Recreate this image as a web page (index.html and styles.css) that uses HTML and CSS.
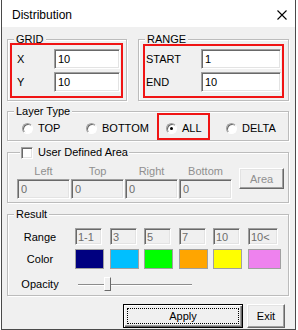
FILE: index.html
```html
<!DOCTYPE html>
<html lang="en">
<head>
    <meta charset="UTF-8">
    <title>Distribution</title>
    <link rel="stylesheet" href="styles.css">
</head>
<body>
    <div class="window">
        <div class="titlebar">
            <span class="title">Distribution</span>
            <svg class="close" width="10" height="10" viewBox="0 0 10 10">
                <path d="M0.5 0.5 L9.5 9.5 M9.5 0.5 L0.5 9.5" stroke="#000" stroke-width="1.1" fill="none"/>
            </svg>
        </div>
        <div class="client">
            <div class="top-row">
                <div class="group grid-group">
                    <div class="group-title">GRID</div>
                    <div class="mark">
                        <div class="field-row"><label>X</label><input class="edit" type="text" value="10"></div>
                        <div class="field-row"><label>Y</label><input class="edit" type="text" value="10"></div>
                    </div>
                </div>
                <div class="group range-group">
                    <div class="group-title">RANGE</div>
                    <div class="mark">
                        <div class="field-row"><label>START</label><input class="edit" type="text" value="1"></div>
                        <div class="field-row"><label>END</label><input class="edit" type="text" value="10"></div>
                    </div>
                </div>
            </div>

            <div class="group layer-group">
                <div class="group-title">Layer Type</div>
                <div class="radio-row">
                    <div class="radio radio-top"><span class="circle"></span>TOP</div>
                    <div class="radio radio-bottom"><span class="circle"></span>BOTTOM</div>
                    <div class="radio radio-all mark"><span class="circle on"></span>ALL</div>
                    <div class="radio radio-delta"><span class="circle"></span>DELTA</div>
                </div>
            </div>

            <div class="group user-group">
                <div class="group-title check-title"><span class="checkbox"></span>User Defined Area</div>
                <div class="area-row">
                    <div class="coord"><span>Left</span><input class="edit" type="text" value="0" disabled></div>
                    <div class="coord"><span>Top</span><input class="edit" type="text" value="0" disabled></div>
                    <div class="coord"><span>Right</span><input class="edit" type="text" value="0" disabled></div>
                    <div class="coord"><span>Bottom</span><input class="edit" type="text" value="0" disabled></div>
                    <button class="btn area-btn" disabled>Area</button>
                </div>
            </div>

            <div class="group result-group">
                <div class="group-title">Result</div>
                <div class="result-row range-row">
                    <span class="name">Range</span>
                    <div class="cells">
                        <input class="edit" type="text" value="1-1" disabled>
                        <input class="edit" type="text" value="3" disabled>
                        <input class="edit" type="text" value="5" disabled>
                        <input class="edit" type="text" value="7" disabled>
                        <input class="edit" type="text" value="10" disabled>
                        <input class="edit last" type="text" value="10&lt;" disabled>
                    </div>
                </div>
                <div class="result-row color-row">
                    <span class="name">Color</span>
                    <div class="cells">
                        <span class="swatch navy"></span>
                        <span class="swatch sky"></span>
                        <span class="swatch lime"></span>
                        <span class="swatch orange"></span>
                        <span class="swatch yellow"></span>
                        <span class="swatch violet last"></span>
                    </div>
                </div>
                <div class="result-row opacity-row">
                    <span class="name">Opacity</span>
                    <div class="slider"><div class="thumb"></div></div>
                </div>
            </div>

            <div class="button-row">
                <button class="btn apply">Apply</button>
                <button class="btn exit">Exit</button>
            </div>
        </div>
    </div>
</body>
</html>
```

FILE: styles.css
```css
/* Dialogo clasico de Windows */
* {
    box-sizing: border-box;
}
body {
    margin: 0;
    background: #fff;
    font-family: "Liberation Sans", Arial, sans-serif;
    font-size: 11px;
    color: #000;
}
.window {
    width: 295px;
    height: 330px;
    margin-left: 1px;
    border: 1px solid #4a4a4a;
    border-top: none;
    display: flex;
    flex-direction: column;
}
.titlebar {
    height: 27px;
    flex: none;
    background: #fff;
    display: flex;
    align-items: center;
    justify-content: space-between;
    padding: 3px 8px 0 10px;
}
.title {
    font-size: 12px;
}
.client {
    flex: 1;
    background: #f0f0f0;
    padding: 12px 6px 0 5px;
}

/* Group boxes */
.group {
    border: 1px solid #bcbcbc;
    box-shadow: inset 1px 1px 0 #fff, 1px 1px 0 #fff;
}
.group-title {
    display: table;
    margin: -7px 0 0 6px;
    padding: 0 2px;
    line-height: 13px;
    background: #f0f0f0;
}
.mark {
    position: relative;
    border: 2px solid #f01414;
}

.top-row {
    display: flex;
    gap: 11px;
}
.grid-group {
    width: 120px;
    padding-bottom: 2px;
}
.range-group {
    width: 151px;
    padding-bottom: 2px;
}
.grid-group .mark {
    margin: -3px 3px 0 2px;
    padding: 4px 1px 4px 5px;
}
.range-group .mark {
    margin: -2px 4px 0 4px;
    padding: 3px 1px 4px 1px;
}
.field-row {
    display: flex;
    align-items: center;
    height: 20px;
}
.field-row + .field-row {
    margin-top: 3px;
}
.field-row label {
    flex: 1;
}
.grid-group .edit {
    width: 66px;
}
.range-group .edit {
    width: 80px;
}

/* Edit boxes */
.edit {
    height: 20px;
    padding: 0 3px;
    font: inherit;
    color: #000;
    background: #fff;
    border: 1px solid;
    border-color: #a0a0a0 #fff #fff #a0a0a0;
    box-shadow: inset 1px 1px 0 #696969, inset -1px -1px 0 #e3e3e3;
    outline: none;
}
.edit:disabled {
    background: #f0f0f0;
    color: #6d6d6d;
}

/* Layer Type */
.layer-group {
    margin-top: 10px;
}
.radio-row {
    display: flex;
    height: 27px;
    margin-top: -5px;
    padding-left: 14px;
}
.radio {
    display: flex;
    align-items: center;
    gap: 5px;
    padding-top: 3px;
}
.radio-top {
    width: 64px;
}
.radio-bottom {
    width: 71px;
}
.radio-all {
    width: 53px;
    padding-left: 7px;
}
.radio-delta {
    margin-left: 16px;
}
.circle {
    flex: none;
    width: 11px;
    height: 11px;
    border-radius: 50%;
    background: #fff;
    border: 1px solid;
    border-color: #a0a0a0 #fff #fff #a0a0a0;
    box-shadow: inset 1px 1px 0 #696969;
    display: flex;
    align-items: center;
    justify-content: center;
}
.circle.on::after {
    content: "";
    width: 3px;
    height: 3px;
    border-radius: 50%;
    background: #000;
}

/* User Defined Area */
.user-group {
    margin-top: 11px;
    padding-bottom: 3px;
}
.check-title {
    display: flex;
    width: fit-content;
    align-items: center;
    gap: 5px;
    margin-left: 12px;
    padding: 0 1px;
}
.checkbox {
    width: 12px;
    height: 12px;
    background: #fff;
    border: 1px solid;
    border-color: #a0a0a0 #fff #fff #a0a0a0;
    box-shadow: inset 1px 1px 0 #696969, inset -1px -1px 0 #e3e3e3;
}
.area-row {
    display: flex;
    align-items: flex-start;
    margin-top: 6px;
    padding-left: 9px;
}
.coord {
    width: 53px;
    display: flex;
    flex-direction: column;
    align-items: center;
}
.coord + .coord {
    margin-left: 1px;
}
.coord span {
    line-height: 13px;
    margin-bottom: 1px;
    color: #8f8f8f;
}
.coord .edit {
    width: 53px;
}

/* Buttons */
.btn {
    font: inherit;
    color: #000;
    background: #f0f0f0;
    padding: 0;
    border: 1px solid;
    border-color: #fff #696969 #696969 #fff;
    box-shadow: inset -1px -1px 0 #a0a0a0, inset 1px 1px 0 #e3e3e3;
}
.btn:disabled {
    color: #8f8f8f;
}
.area-btn {
    width: 45px;
    height: 21px;
    margin: 3px 0 0 7px;
}

/* Result */
.result-group {
    margin-top: 11px;
}
.result-row {
    display: flex;
    align-items: center;
}
.result-row .name {
    width: 64px;
    text-align: center;
}
.cells {
    display: grid;
    grid-template-columns: 35px 34px 35px 34px 35px 34px;
    margin-left: 3px;
}
.range-row {
    margin-top: 7px;
    height: 17px;
}
.range-row .edit {
    width: 27px;
    height: 17px;
    padding: 0 2px;
}
.range-row .edit.last {
    width: 30px;
}
.color-row {
    margin-top: 4px;
    height: 20px;
}
.swatch {
    width: 29px;
    height: 20px;
    border: 1px solid #a0a0a0;
}
.swatch.last {
    width: 33px;
}
.navy { background: #000080; }
.sky { background: #00bfff; }
.lime { background: #00ff00; }
.orange { background: #ffa500; }
.yellow { background: #ffff00; }
.violet { background: #ee82ee; }

.opacity-row {
    margin-top: 4px;
    height: 22px;
}
.slider {
    width: 114px;
    height: 22px;
    margin-left: 6px;
    padding-top: 4px;
    background:
        linear-gradient(#8c8c8c, #8c8c8c) 0 11px / 100% 1px no-repeat,
        linear-gradient(#fff, #fff) 0 12px / 100% 1px no-repeat;
}
.thumb {
    width: 7px;
    height: 14px;
    margin-left: 26px;
    background: #f0f0f0;
    border: 1px solid;
    border-color: #fff #696969 #696969 #fff;
}

.button-row {
    display: flex;
    justify-content: flex-end;
    gap: 4px;
    margin-top: 8px;
    padding-right: 4px;
}
.apply {
    width: 120px;
    height: 24px;
    border: 1px solid #000;
    box-shadow: inset 1px 1px 0 #fff, inset -1px -1px 0 #696969, inset -2px -2px 0 #a0a0a0;
    outline: 1px dotted #000;
    outline-offset: -5px;
}
.exit {
    width: 38px;
    height: 24px;
}
```
